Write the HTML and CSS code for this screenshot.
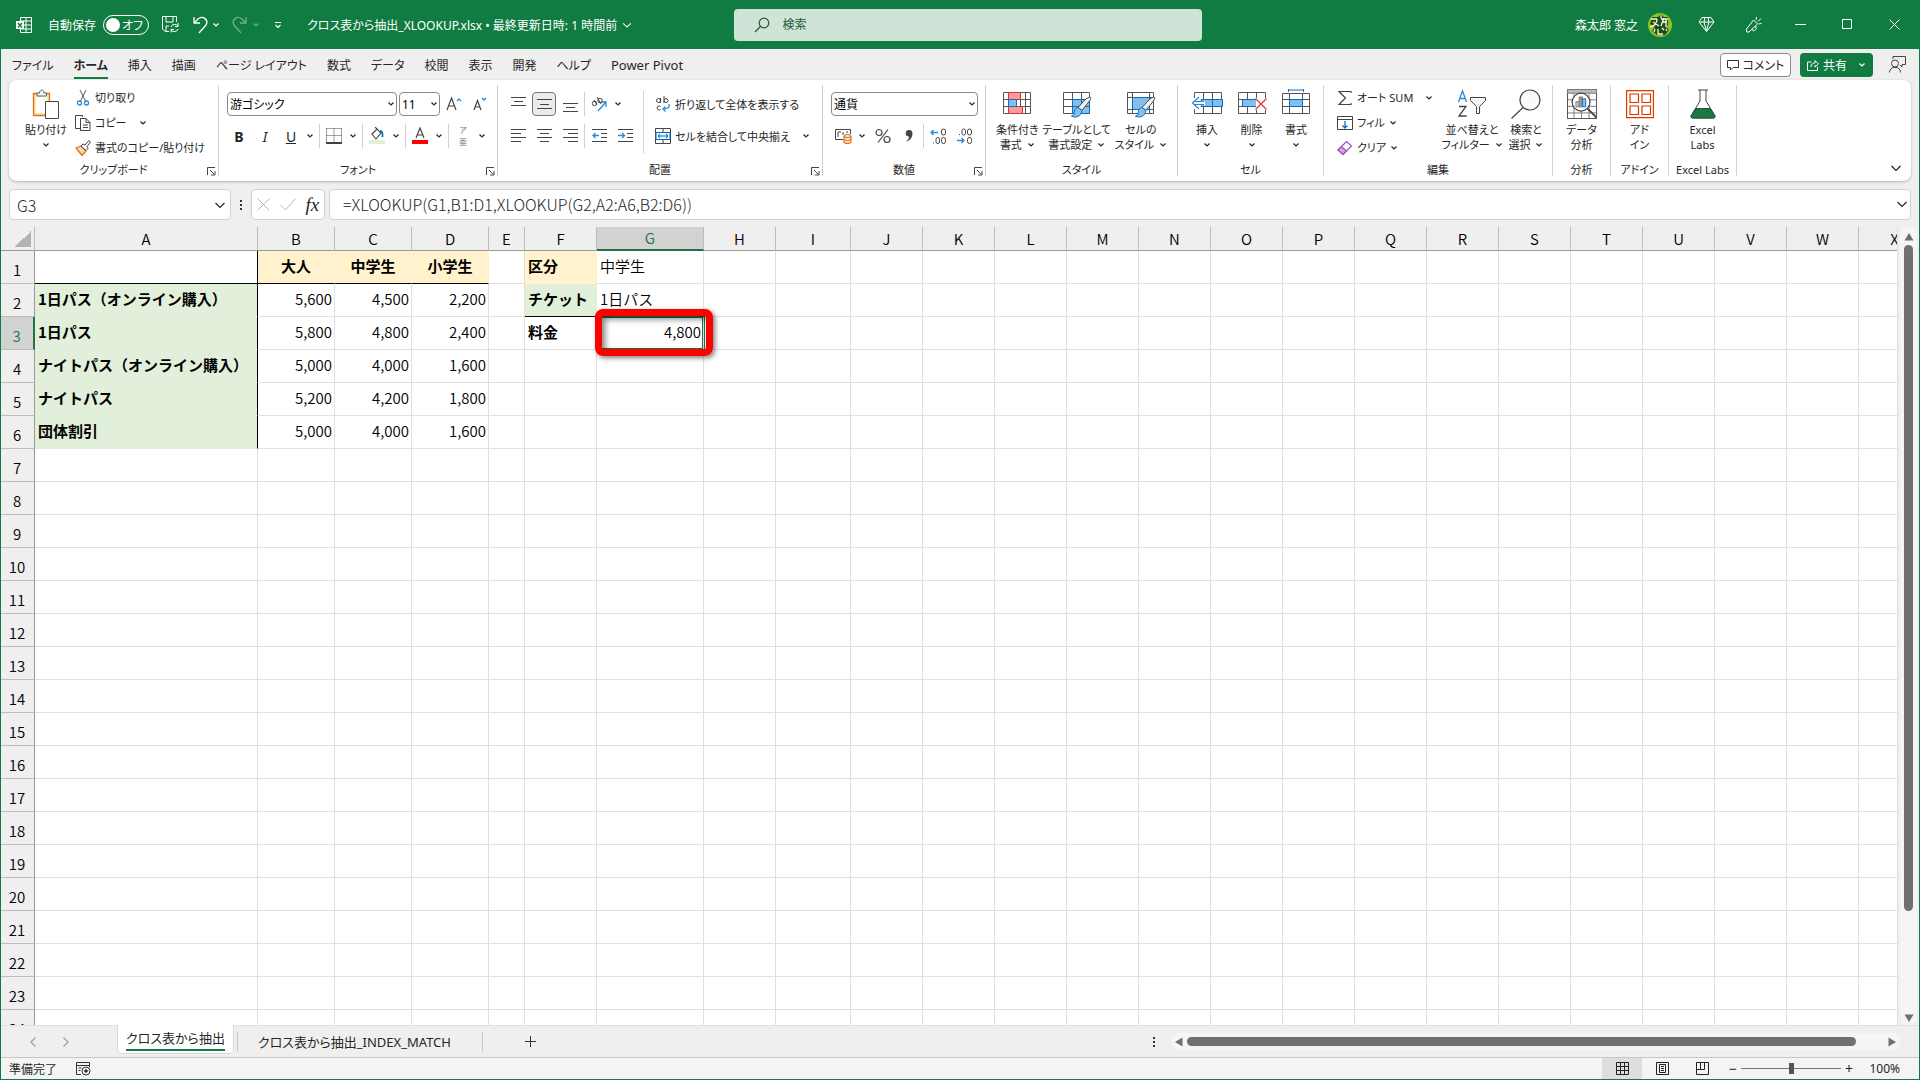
FILE: index.html
```html
<!DOCTYPE html>
<html lang="ja">
<head>
  <meta charset="UTF-8">
  <meta name="viewport" content="width=device-width, initial-scale=1.0">
  <title>クロス表から抽出_XLOOKUP.xlsx</title>
  <link rel="stylesheet" href="styles.css">
</head>
<body>

  <svg class="defs" aria-hidden="true">
    <symbol id="chev" viewBox="0 0 8 8"><path d="M1.5 2.5 4 5l2.5-2.5" fill="none" stroke="currentColor" stroke-width="1.2"/></symbol>
    <symbol id="chev-big" viewBox="0 0 14 14"><path d="m2.5 5 4.500 4.500L11.500 5" fill="none" stroke="currentColor" stroke-width="1.2"/></symbol>
    <symbol id="launch" viewBox="0 0 9 9"><path d="M.5 8V.5H8M3 3l4 4M8 4v4H4" fill="none" stroke="#444"/></symbol>
    <symbol id="brush" viewBox="0 0 22 24"><path d="M20 1c2 0 1 2 0 4l-8 10-4-3 8-9z" fill="#f3f3f3" stroke="#444"/><path d="M8 12c-3 0-4 3-4 5s-2 4-3 4c4 2 10 1 11-6z" fill="#83beec" stroke="#0f6cbd"/></symbol>
  </svg>

  <div class="app">
    <header class="titlebar">
      <div class="title-left">
        <svg class="logo" width="16" height="16" viewBox="0 0 16 16" fill="none" stroke="#fff"><path d="M4.5 4V.5h11v15h-11V12M10 .5v15M4.5 4h11M8 8h7.5M4.5 12h11"/><path d="M0 4h8v8H0z" fill="#fff" stroke="none"/><path d="m2 6 4 4.5M6 6l-4 4.5" stroke="#107c41" stroke-width="1.5"/></svg>
        <label class="autosave">自動保存 <span class="toggle"><input type="checkbox" role="switch">オフ</span></label>
        <button class="tb save" aria-label="保存"><svg width="17" height="17" viewBox="0 0 17 17" fill="none" stroke="#fff"><path d="M7 15.5H3L.5 13V.5h14V6M4 .5V6h7V.5M4 15v-5h3"/><path d="M9 11a4 4 0 0 1 7-1M16 7v3.500h-3M16 13a4 4 0 0 1-7 1M9 16.500V13.500h3"/></svg></button>
        <button class="tb undo" aria-label="元に戻す"><svg width="16" height="18" viewBox="0 0 16 18" fill="none" stroke="#fff" stroke-width="1.3"><path d="M2 1v6h6M2 7l4-4c5-4 11 1 8 6l-7 8"/></svg></button>
        <button class="tb chevb" aria-label="元に戻す一覧"><svg width="8" height="8"><use href="#chev"/></svg></button>
        <button class="tb redo" aria-label="やり直し" disabled><svg width="16" height="18" viewBox="0 0 16 18" fill="none" stroke="#fff" stroke-width="1.3"><path d="M14 1v6H8M14 7l-4-4C5-1 -1 4 2 9l7 8"/></svg></button>
        <button class="tb chevb dim" aria-label="やり直し一覧" disabled><svg width="8" height="8"><use href="#chev"/></svg></button>
        <button class="tb custom" aria-label="カスタマイズ"><svg width="8" height="10" viewBox="0 0 8 10" fill="none" stroke="#fff" stroke-width="1.2"><path d="M1 2.5h6M1.5 5 4 7.500 6.500 5"/></svg></button>
        <span class="filename">クロス表から抽出_XLOOKUP.xlsx • 最終更新日時: 1 時間前</span>
        <svg width="12" height="12"><use href="#chev-big"/></svg>
      </div>
      <label class="search">
        <svg width="16" height="16" viewBox="0 0 16 16" fill="none" stroke="#185c37" stroke-width="1.2"><circle cx="10" cy="6" r="4.8"/><path d="M6.5 9.5 1 15"/></svg>
        <input type="text" placeholder="検索" aria-label="検索">
      </label>
      <div class="title-right">
        <span class="user">森太郎 窓之</span>
        <svg class="avatar" width="24" height="24" viewBox="0 0 24 24"><circle cx="12" cy="12" r="12" fill="#8fc31f"/><path d="M4 4h6l3-3 3 3h4v8l-2 2 3 3-4 5H9l-5-4 3-4-5-3z" fill="#1f4d17"/><path d="M3 6h6M9 6c0 4-3 7-7 8M5 9l6 4M13 2v3M13 6h7M16 5l-3 8M14 9h5M18 6v8M10 16v5h5M14 15l2 2M18 16l1 2M7 16l-1 3" stroke="#f4f9e8" stroke-width="1.3" fill="none"/></svg>
        <button class="win" aria-label="プレミアム"><svg width="17" height="17" viewBox="0 0 17 17" fill="none" stroke="#fff"><path d="M4 1.5h9L16 6l-7.5 9.5L1 6zM1 6h15M6 6l2.500 9L11 6M6 6l1-4.500M11 6l-1-4.500"/></svg></button>
        <button class="win" aria-label="新機能"><svg width="17" height="17" viewBox="0 0 17 17" fill="none" stroke="#fff"><path d="M8.500 4 12.500 8 4 16H1.500v-3zM7 13c0 2 3 3 4-.5V10M11 4l.5-3M13 5.500l3-3M13.500 8l3-.5"/></svg></button>
        <button class="win" aria-label="最小化"><svg width="11" height="11" viewBox="0 0 11 11" stroke="#fff"><path d="M0 5.500h11"/></svg></button>
        <button class="win" aria-label="最大化"><svg width="11" height="11" viewBox="0 0 11 11" fill="none" stroke="#fff"><path d="M.5.5h9v9h-9z"/></svg></button>
        <button class="win" aria-label="閉じる"><svg width="11" height="11" viewBox="0 0 11 11" stroke="#fff"><path d="m.5.5 10 10m0-10-10 10"/></svg></button>
      </div>
    </header>

    <nav class="tabs">
      <a href="#">ファイル</a>
      <a href="#" class="active">ホーム</a>
      <a href="#">挿入</a>
      <a href="#">描画</a>
      <a href="#">ページ レイアウト</a>
      <a href="#">数式</a>
      <a href="#">データ</a>
      <a href="#">校閲</a>
      <a href="#">表示</a>
      <a href="#">開発</a>
      <a href="#">ヘルプ</a>
      <a href="#" class="latin">Power Pivot</a>
      <div class="tab-actions">
        <button class="comment"><svg width="12" height="12" viewBox="0 0 12 12" fill="none" stroke="#333"><path d="M.5 1.5h11v7H6L3.500 11V8.500h-3z"/></svg>コメント</button>
        <button class="share"><svg width="12" height="12" viewBox="0 0 12 12" fill="none" stroke="#fff"><path d="M4.5 3H.5v8.500h10V8M4 8c0-3 2-4 4-4V1.500L11.500 5 8 8V6"/></svg>共有 <svg width="8" height="8"><use href="#chev"/></svg></button>
        <button class="present" aria-label="発表"><svg width="17" height="17" viewBox="0 0 17 17" fill="none" stroke="#444"><circle cx="6" cy="7.500" r="3.500"/><path d="M.5 16.500c0-7 11-7 11 0M4 3V.5h12.500v8H13v2.500L11 9"/></svg></button>
      </div>
    </nav>

    <section class="ribbon">
      <div class="group g-clip">
        <div class="body">
          <button class="big paste">
            <svg width="28" height="30" viewBox="0 0 28 30"><path d="M1.500 4.500h16v22h-16z" fill="#fde3a7" stroke="#d9711f" stroke-width="1.3"/><path d="M4 8h11v16H4z" fill="#fff"/><path d="M5 7V4h2.500c0-4 4.500-4 4.500 0h2.500v3z" fill="#f3f3f3" stroke="#666"/><path d="M13.500 12.500h13v17h-13z" fill="#fff" stroke="#444"/></svg>
            <span>貼り付け</span>
            <svg width="8" height="8"><use href="#chev"/></svg>
          </button>
          <div class="stack">
            <button class="small"><svg width="16" height="16" viewBox="0 0 16 16" fill="none" stroke="#555"><path d="m5 0 5.500 11M11 0 5.500 11"/><circle cx="4.500" cy="13" r="2" stroke="#2b88d8" stroke-width="1.3"/><circle cx="11.500" cy="13" r="2" stroke="#2b88d8" stroke-width="1.3"/></svg>切り取り</button>
            <button class="small"><svg width="16" height="16" viewBox="0 0 16 16" fill="none" stroke="#444"><path d="M5 13.500H.5V.5h7V2M5.500 3.500H11l4 4v8H5.500zM11 3.500v4h4M8 10h5M8 12.500h5"/></svg>コピー<svg class="far" width="8" height="8"><use href="#chev"/></svg></button>
            <button class="small"><svg width="16" height="16" viewBox="0 0 16 16"><path d="m1 8 5-2 5 5-4 4.500z" fill="#fbd9a5" stroke="#d9711f" stroke-width="1.3"/><path d="m6 6 2-2 2 1 4-4.500 1.500 1.500L12 6.500l1 2-2 2z" fill="#fff" stroke="#444"/></svg>書式のコピー/貼り付け</button>
          </div>
        </div>
        <footer>クリップボード<button class="launch" aria-label="クリップボードの詳細"><svg width="9" height="9"><use href="#launch"/></svg></button></footer>
      </div>

      <div class="group g-font">
        <div class="body rows">
          <div class="row top">
            <span class="combo font-name"><select aria-label="フォント"><option>游ゴシック</option></select><svg width="8" height="8"><use href="#chev"/></svg></span>
            <span class="combo font-size"><select aria-label="フォント サイズ"><option>11</option></select><svg width="8" height="8"><use href="#chev"/></svg></span>
            <button class="ib grow" aria-label="フォント サイズの拡大"><svg width="16" height="16" viewBox="0 0 16 16" fill="none"><path d="M1 14 5.500 2 10 14M2.500 10h6" stroke="#444" stroke-width="1.2"/><path d="m11 5 2-2 2 2" stroke="#2b88d8" stroke-width="1.3"/></svg></button>
            <button class="ib" aria-label="フォント サイズの縮小"><svg width="16" height="16" viewBox="0 0 16 16" fill="none"><path d="M2 14 5.500 4.500 9 14M3 11h5" stroke="#444" stroke-width="1.2"/><path d="m10 2 2 2 2-2" stroke="#2b88d8" stroke-width="1.3"/></svg></button>
          </div>
          <div class="row">
            <button class="ib"><b>B</b></button>
            <button class="ib"><i>I</i></button>
            <button class="ib"><u>U</u></button>
            <button class="cb" aria-label="下線"><svg width="8" height="8"><use href="#chev"/></svg></button>
            <span class="vsep"></span>
            <button class="ib" aria-label="罫線"><svg width="16" height="16" viewBox="0 0 16 16" fill="none" stroke="#444"><path d="M.5.5h15M.5 7.500h15M.5.5v14M8 .5v14M15.500.5v14" stroke-dasharray="1 1"/><path d="M0 15h16" stroke="#000" stroke-width="1.5"/></svg></button>
            <button class="cb" aria-label="罫線一覧"><svg width="8" height="8"><use href="#chev"/></svg></button>
            <span class="vsep"></span>
            <button class="ib" aria-label="塗りつぶし"><svg width="16" height="18" viewBox="0 0 16 18" fill="none"><path d="m3 7 5-5 4 4-5 6zM6 0l3 3" stroke="#444" stroke-width="1.1"/><path d="M11 4c2 0 3 2 2.500 6" stroke="#0f6cbd" stroke-width="1.8"/><path d="M0 13h16v4H0z" fill="#e2efda"/></svg></button>
            <button class="cb" aria-label="塗りつぶし一覧"><svg width="8" height="8"><use href="#chev"/></svg></button>
            <span class="vsep"></span>
            <button class="ib" aria-label="フォントの色"><svg width="16" height="18" viewBox="0 0 16 18" fill="none"><path d="m4 11 4-10 4 10M5.500 8h5" stroke="#444" stroke-width="1.2"/><path d="M0 13h16v4H0z" fill="#f00"/></svg></button>
            <button class="cb" aria-label="フォントの色一覧"><svg width="8" height="8"><use href="#chev"/></svg></button>
            <span class="vsep"></span>
            <button class="ib ruby"><span>ア</span><span>亜</span></button>
            <button class="cb" aria-label="ふりがな"><svg width="8" height="8"><use href="#chev"/></svg></button>
          </div>
        </div>
        <footer>フォント<button class="launch" aria-label="フォントの詳細"><svg width="9" height="9"><use href="#launch"/></svg></button></footer>
      </div>

      <div class="group g-align">
        <div class="body">
          <div class="rows">
            <div class="row top">
              <button class="ib" aria-label="上揃え"><svg width="15" height="16" viewBox="0 0 15 16" stroke="#444"><path d="M0 1.500h15M3 5.500h9M0 9.500h15"/></svg></button>
              <button class="ib on" aria-label="上下中央揃え"><svg width="15" height="16" viewBox="0 0 15 16" stroke="#444"><path d="M0 3.500h15M3 8.500h9M0 12.500h15"/></svg></button>
              <button class="ib" aria-label="下揃え"><svg width="15" height="16" viewBox="0 0 15 16" stroke="#444"><path d="M0 7.500h15M3 11.500h9M0 15.500h15"/></svg></button>
              <span class="vsep"></span>
              <button class="ib" aria-label="方向"><svg width="17" height="17" viewBox="0 0 17 17" fill="none"><path d="M7 15 15 6M15 11V6h-5" stroke="#2b88d8" stroke-width="1.3"/><circle cx="3.500" cy="7.500" r="2.200" stroke="#444"/><path d="m3 4 3 5M6 1l4 7" stroke="#444"/><circle cx="9" cy="4.500" r="2.200" stroke="#444"/></svg></button>
              <button class="cb" aria-label="方向一覧"><svg width="8" height="8"><use href="#chev"/></svg></button>
            </div>
            <div class="row">
              <button class="ib" aria-label="左揃え"><svg width="15" height="14" viewBox="0 0 15 14" stroke="#444"><path d="M0 .5h15M0 4.500h10M0 8.500h15M0 12.500h10"/></svg></button>
              <button class="ib" aria-label="中央揃え"><svg width="15" height="14" viewBox="0 0 15 14" stroke="#444"><path d="M0 .5h15M3 4.500h9M0 8.500h15M3 12.500h9"/></svg></button>
              <button class="ib" aria-label="右揃え"><svg width="15" height="14" viewBox="0 0 15 14" stroke="#444"><path d="M0 .5h15M5 4.500h10M0 8.500h15M5 12.500h10"/></svg></button>
              <span class="vsep"></span>
              <button class="ib" aria-label="インデントを減らす"><svg width="15" height="14" viewBox="0 0 15 14" fill="none" stroke="#444"><path d="M0 .5h15M9 4.500h6M9 8.500h6M0 12.500h15"/><path d="M7 6.500H1M3.500 4 1 6.500 3.500 9" stroke="#2b88d8" stroke-width="1.3"/></svg></button>
              <button class="ib" aria-label="インデントを増やす"><svg width="15" height="14" viewBox="0 0 15 14" fill="none" stroke="#444"><path d="M0 .5h15M9 4.500h6M9 8.500h6M0 12.500h15"/><path d="M0 6.500h6M4 4l2.500 2.500L4 9" stroke="#2b88d8" stroke-width="1.3"/></svg></button>
            </div>
          </div>
          <div class="rows wraps">
            <button class="small"><svg width="16" height="16" viewBox="0 0 16 16" fill="none" stroke="#444"><circle cx="3.500" cy="4.500" r="2"/><path d="M5.500 2v5M9 0v7"/><circle cx="11" cy="4.500" r="2"/><path d="M5.500 10.500a2 2 0 1 0 0 3"/><path d="M14 8c1 4-2 5-6 5M10.500 10.500 8 13l2.500 2.500" stroke="#2b88d8" stroke-width="1.3"/></svg>折り返して全体を表示する</button>
            <button class="small"><svg width="16" height="16" viewBox="0 0 16 16" fill="none" stroke="#444"><path d="M.5.5h15v15H.5zM.5 4.500h15M.5 11.500h15M8 .5v4M8 11.500v4"/><path d="M1 4.500h14v7H1z" fill="#e8f3fc" stroke="#0f6cbd"/><path d="M3 8h10M5 6 3 8l2 2M11 6l2 2-2 2" stroke="#0f6cbd"/></svg>セルを結合して中央揃え<svg class="far" width="8" height="8"><use href="#chev"/></svg></button>
          </div>
        </div>
        <footer>配置<button class="launch" aria-label="配置の詳細"><svg width="9" height="9"><use href="#launch"/></svg></button></footer>
      </div>

      <div class="group g-num">
        <div class="body rows">
          <div class="row top">
            <span class="combo num-format"><select aria-label="数値の書式"><option>通貨</option></select><svg width="8" height="8"><use href="#chev"/></svg></span>
          </div>
          <div class="row">
            <button class="ib" aria-label="通貨表示形式"><svg width="17" height="16" viewBox="0 0 17 16" fill="none"><path d="M8 11.500H.5v-10h15V6M3 9V4h3M8 4v3M11 4h2" stroke="#444"/><path d="M9 8v6c0 2 7 2 7 0V8" fill="#fde0c4" stroke="#d9711f" stroke-width="1.2"/><ellipse cx="12.500" cy="8" rx="3.500" ry="1.500" fill="#fde0c4" stroke="#d9711f"/><path d="M9 11c0 2 7 2 7 0" stroke="#d9711f"/></svg></button>
            <button class="cb" aria-label="通貨一覧"><svg width="8" height="8"><use href="#chev"/></svg></button>
            <button class="ib" aria-label="パーセント"><svg width="16" height="16" viewBox="0 0 16 16" fill="none" stroke="#444" stroke-width="1.2"><circle cx="4" cy="4.500" r="3"/><circle cx="12" cy="11.500" r="3"/><path d="M13 1.500 3 14.500"/></svg></button>
            <button class="ib" aria-label="桁区切り"><svg width="8" height="14" viewBox="0 0 8 14"><path d="M4 1a3.200 3.200 0 1 0 0 6.500C4 10 2.500 11.500 1 12.500 5 12 7.500 8 7.500 4.500 7.500 2 6 1 4 1z" fill="#444"/></svg></button>
            <span class="vsep"></span>
            <button class="ib" aria-label="小数点以下の表示桁数を増やす"><svg width="17" height="17" viewBox="0 0 17 17" fill="none" stroke="#444"><rect x="11.500" y="1" width="4" height="6" rx="2"/><rect x="6" y="9.500" width="3.500" height="6" rx="1.700"/><rect x="11.500" y="9.500" width="4" height="6" rx="2"/><path d="M3 15h1"/><path d="M8 4.500H1M3.500 2 1 4.500 3.500 7" stroke="#2b88d8" stroke-width="1.3"/></svg></button>
            <button class="ib" aria-label="小数点以下の表示桁数を減らす"><svg width="17" height="17" viewBox="0 0 17 17" fill="none" stroke="#444"><rect x="6" y="1" width="3.500" height="6" rx="1.700"/><rect x="11.500" y="1" width="4" height="6" rx="2"/><rect x="11.500" y="9.500" width="4" height="6" rx="2"/><path d="M3 6.500h1"/><path d="M1 12.500h7M5.500 10 8 12.500 5.500 15" stroke="#2b88d8" stroke-width="1.3"/></svg></button>
          </div>
        </div>
        <footer>数値<button class="launch" aria-label="数値の詳細"><svg width="9" height="9"><use href="#launch"/></svg></button></footer>
      </div>

      <div class="group g-style">
        <div class="body">
          <button class="big">
            <svg width="30" height="30" viewBox="0 0 30 30" fill="none" stroke="#555"><path d="M1.500 3.500h27v21h-27zM1.500 10.500h27M1.500 17.500h27M6.500 3.500v21M18.500 3.500v21M23.500 3.500v21"/><path d="M6.500 3.500h12v7h-12zM6.500 17.500h14v7h-14z" fill="#ff9a9a" stroke="#d13438"/><path d="M6.500 10.500h8v7h-8z" fill="#83beec" stroke="#0f6cbd"/></svg>
            <span>条件付き<br>書式 <svg width="8" height="8"><use href="#chev"/></svg></span>
          </button>
          <button class="big">
            <svg width="30" height="30" viewBox="0 0 30 30" fill="none" stroke="#555"><path d="M1.500 3.500h26v21h-26zM1.500 10.500h26M1.500 17.500h26M10.500 3.500v21M19.500 3.500v21"/><path d="M10.500 10.500h17v14h-17z" fill="#83beec" stroke="#0f6cbd"/><path d="M10 17.500h17M19.500 10.500v14" stroke="#0f6cbd"/><use href="#brush" x="8" y="7" width="22" height="23"/></svg>
            <span>テーブルとして<br>書式設定 <svg width="8" height="8"><use href="#chev"/></svg></span>
          </button>
          <button class="big">
            <svg width="30" height="30" viewBox="0 0 30 30" fill="none" stroke="#555"><path d="M1.500 3.500h26v21h-26zM1.500 8.500h26M1.500 20.500h26M6.500 3.500v21M23.500 3.500v21"/><path d="M6.500 8.500h17v12h-17z" fill="#83beec" stroke="#0f6cbd"/><use href="#brush" x="8" y="7" width="22" height="23"/></svg>
            <span>セルの<br>スタイル <svg width="8" height="8"><use href="#chev"/></svg></span>
          </button>
        </div>
        <footer>スタイル</footer>
      </div>

      <div class="group g-cell">
        <div class="body">
          <button class="big">
            <svg width="32" height="30" viewBox="0 0 32 30" fill="none" stroke="#555"><path d="M3.500 3.500h27v21h-27zM12.500 3.500v21M21.500 3.500v21"/><path d="M10 10.500h21.500v7H10z" fill="#83beec" stroke="#0f6cbd"/><path d="M21.500 10.500v7" stroke="#0f6cbd"/><path d="M1 9h6l3 3h4v4h-4l-3 4H1z" fill="#fff" stroke="none"/><path d="M13 12.500H3M13 15.500H3M8 8l-6.500 6L8 20" stroke="#2b88d8" stroke-width="1.2"/></svg>
            <span>挿入</span><svg width="8" height="8"><use href="#chev"/></svg>
          </button>
          <button class="big">
            <svg width="32" height="30" viewBox="0 0 32 30" fill="none" stroke="#555"><path d="M2.500 3.500h27v21h-27zM2.500 10.500h27M2.500 17.500h27M11.500 3.500v21M20.500 3.500v21"/><path d="M6.500 10.500h15v7h-15z" fill="#83beec" stroke="#0f6cbd"/><path d="M20 9h12v12H20z" fill="#fff" stroke="none"/><path d="m19.500 9.500 11 11m0-11-11 11" stroke="#e8383d" stroke-width="1.300"/></svg>
            <span>削除</span><svg width="8" height="8"><use href="#chev"/></svg>
          </button>
          <button class="big">
            <svg width="32" height="30" viewBox="0 0 32 30" fill="none" stroke="#555"><path d="M2.500 4.500h27v20h-27zM2.500 10.500h27M2.500 17.500h27M9.500 4.500v20M22.500 4.500v20"/><path d="M9.500 10.500h13v7h-13z" fill="#83beec" stroke="#0f6cbd"/><path d="M8.500 1h15M8.500 0v3M23.500 0v3" stroke="#0f6cbd"/></svg>
            <span>書式</span><svg width="8" height="8"><use href="#chev"/></svg>
          </button>
        </div>
        <footer>セル</footer>
      </div>

      <div class="group g-edit">
        <div class="body">
          <div class="stack">
            <button class="small"><svg width="16" height="16" viewBox="0 0 16 16" fill="none" stroke="#444" stroke-width="1.2"><path d="M14 3V1.500H2L8.500 8 2 14.500h12V13"/></svg>オート SUM<svg class="far" width="8" height="8"><use href="#chev"/></svg></button>
            <button class="small"><svg width="16" height="16" viewBox="0 0 16 16" fill="none" stroke="#444"><path d="M.5 1.500h15v13H.5zM.5 4.500h15"/><path d="M8 6v7M5.500 10.500 8 13l2.500-2.500" stroke="#0f6cbd" stroke-width="1.3"/></svg>フィル<svg class="near" width="8" height="8"><use href="#chev"/></svg></button>
            <button class="small"><svg width="16" height="16" viewBox="0 0 16 16" stroke="#a34fb5" stroke-width="1.2"><path d="m1 10 8.500-8.500 5 4.500L6 14.500z" fill="#fff"/><path d="m1 10 3.500-3.500 5 4.500L6 14.500z" fill="#d9a5e3"/></svg>クリア<svg class="near" width="8" height="8"><use href="#chev"/></svg></button>
          </div>
          <button class="big sort">
            <svg width="30" height="30" viewBox="0 0 30 30" fill="none"><path d="m1.500 13 4-11 4 11M3 9.500h5" stroke="#2b88d8" stroke-width="1.3"/><path d="M2 17.500h7L2 27h7.500" stroke="#444" stroke-width="1.3"/><path d="M13.500 8.500h15v3l-6 6v7h-3v-7l-6-6z" fill="#f7f7f7" stroke="#444"/></svg>
            <span>並べ替えと<br>フィルター <svg width="8" height="8"><use href="#chev"/></svg></span>
          </button>
          <button class="big find">
            <svg width="30" height="30" viewBox="0 0 30 30" fill="none" stroke="#444" stroke-width="1.2"><circle cx="19" cy="11" r="10" fill="#fafafa"/><path d="M12 18.500.5 29.500"/></svg>
            <span>検索と<br>選択 <svg width="8" height="8"><use href="#chev"/></svg></span>
          </button>
        </div>
        <footer>編集</footer>
      </div>

      <div class="group g-small">
        <div class="body">
          <button class="big">
            <svg width="32" height="32" viewBox="0 0 32 32" fill="none" stroke="#777"><path d="M.5.5h31v31H.5z" stroke="#444"/><path d="M.5.5h31v4H.5z" fill="#bbb"/><path d="M.5 11.500h31M.5 18.500h31M.5 25.500h31M7.500 5v26M15.500 5v26M23.500 5v26"/><circle cx="15" cy="14" r="9.500" fill="#fff" stroke="#444" stroke-width="1.3"/><path d="M9.500 13.500H13V19H9.500z" fill="#ccc"/><path d="M13 8.500h3.500V19H13z" fill="#999"/><path d="M16.500 10.500H20V19h-3.500z" fill="#83beec" stroke="#0f6cbd"/><path d="m22 21 9.500 9.500" stroke="#444" stroke-width="2"/></svg>
            <span>データ<br>分析</span>
          </button>
        </div>
        <footer>分析</footer>
      </div>
      <div class="group g-small">
        <div class="body">
          <button class="big">
            <svg width="28" height="30" viewBox="0 0 28 30" fill="none" stroke="#d83b01" stroke-width="1.2"><path d="M.6 1.600h26.800v27H.6zM4 5h8.500v8.500H4zM16 5h8.500v8.500H16zM4 17h8.500v8.500H4zM16 17h8.500v8.500H16z"/></svg>
            <span>アド<br>イン</span>
          </button>
        </div>
        <footer>アドイン</footer>
      </div>
      <div class="group g-labs">
        <div class="body">
          <button class="big">
            <svg width="26" height="30" viewBox="0 0 26 30"><path d="M10 1v11L1 27c0 2 1 2 2 2h20c1 0 2 0 2-2l-9-15V1" fill="#fff" stroke="#444"/><path d="M8 1h10" stroke="#444"/><path d="M5.500 19.500h15L25 27c0 2-1 2-2 2H3c-1 0-2 0-2-2z" fill="#217346" stroke="#185c37"/></svg>
            <span>Excel<br>Labs</span>
          </button>
        </div>
        <footer>Excel Labs</footer>
      </div>
      <button class="collapse" aria-label="リボンを折りたたむ"><svg width="14" height="14"><use href="#chev-big"/></svg></button>
    </section>

    <div class="formula-bar">
      <label class="box name-box"><input type="text" value="G3" aria-label="名前ボックス"><svg width="14" height="14"><use href="#chev-big"/></svg></label>
      <span class="dots"></span>
      <div class="box fx-box">
        <button aria-label="キャンセル"><svg width="13" height="13" viewBox="0 0 13 13" stroke="#b5b5b5"><path d="m.5.5 12 12m0-12-12 12"/></svg></button>
        <button aria-label="入力"><svg width="16" height="13" viewBox="0 0 16 13" fill="none" stroke="#b5b5b5"><path d="m.5 7 5 5L15.500.5"/></svg></button>
        <button class="fx">fx</button>
      </div>
      <label class="box formula"><input type="text" value="=XLOOKUP(G1,B1:D1,XLOOKUP(G2,A2:A6,B2:D6))" aria-label="数式"><svg width="14" height="14"><use href="#chev-big"/></svg></label>
    </div>

    <main class="workspace">
      <div class="sheet">
        <table id="grid"></table>
      </div>
      <div class="vscroll">
        <svg width="10" height="8" viewBox="0 0 10 8"><path d="M5 0 9.500 7.500h-9z" fill="#707070"/></svg>
        <div class="track"><div class="thumb"></div></div>
        <svg width="10" height="8" viewBox="0 0 10 8"><path d="M5 8 .5.5h9z" fill="#707070"/></svg>
      </div>
    </main>

    <div class="sheetbar">
      <button class="nav" aria-label="前のシート"><svg width="6" height="10" viewBox="0 0 6 10" fill="none" stroke="#a0a0a0" stroke-width="1.3"><path d="M5.500.5 1 5l4.500 4.500"/></svg></button>
      <button class="nav" aria-label="次のシート"><svg width="6" height="10" viewBox="0 0 6 10" fill="none" stroke="#a0a0a0" stroke-width="1.3"><path d="M.5.5 5 5 .5 9.500"/></svg></button>
      <a href="#" class="sheet-tab current"><span>クロス表から抽出</span></a>
      <a href="#" class="sheet-tab">クロス表から抽出_INDEX_MATCH</a>
      <button class="add" aria-label="新しいシート"><svg width="11" height="11" viewBox="0 0 11 11" stroke="#333"><path d="M0 5.500h11M5.500 0v11"/></svg></button>
      <span class="dots"></span>
      <div class="hscroll">
        <svg width="8" height="10" viewBox="0 0 8 10"><path d="m0 5 7.500-4.500v9z" fill="#707070"/></svg>
        <div class="track"><div class="thumb"></div></div>
        <svg width="8" height="10" viewBox="0 0 8 10"><path d="M8 5 .5.5v9z" fill="#707070"/></svg>
      </div>
    </div>

    <footer class="status">
      <span>準備完了</span>
      <svg class="macro" width="15" height="14" viewBox="0 0 15 14" fill="none" stroke="#333"><path d="M5 12.500H.5V.5h13V5M.5 3.500h13M2.500 6h3M2.500 8.500h2"/><circle cx="10" cy="9" r="4"/><circle cx="10" cy="9" r="1.3" fill="#333"/></svg>
      <div class="views">
        <button class="on" aria-label="標準"><svg width="13" height="13" viewBox="0 0 13 13" fill="none" stroke="#222"><path d="M.5.5h12v12H.5zM.5 4.500h12M.5 8.500h12M4.500.5v12M8.500.5v12"/></svg></button>
        <button aria-label="ページ レイアウト"><svg width="13" height="13" viewBox="0 0 13 13" fill="none" stroke="#222"><path d="M.5.5h12v12H.5zM3.500 2.500h6v8h-6zM5 4.500h3M5 6.500h3M5 8.500h3"/></svg></button>
        <button aria-label="改ページ プレビュー"><svg width="13" height="13" viewBox="0 0 13 13" fill="none" stroke="#222"><path d="M.5.5h12v12H.5zM.5 7.500h8v-7M4.500.5v7"/></svg></button>
      </div>
      <button class="zoom" aria-label="縮小">−</button>
      <input type="range" min="10" max="190" value="100" aria-label="ズーム">
      <button class="zoom" aria-label="拡大">+</button>
      <span class="percent">100%</span>
    </footer>
  </div>

  <script>
    const widths = { A: 223, B: 77, C: 77, D: 77, E: 36, F: 72, G: 107, I: 75 };
    const cols = 'ABCDEFGHIJKLMNOPQRSTUVWX'.split('');
    const cells = {
      B1: ['大人', 'head'], C1: ['中学生', 'head'], D1: ['小学生', 'head'],
      A1: ['', 'edge under'],
      A2: ['1日パス（オンライン購入）', 'item edge'],
      A3: ['1日パス', 'item edge'],
      A4: ['ナイトパス（オンライン購入）', 'item edge'],
      A5: ['ナイトパス', 'item edge'],
      A6: ['団体割引', 'item edge'],
      F1: ['区分', 'key yellow'], G1: ['中学生', ''],
      F2: ['チケット', 'key green under'], G2: ['1日パス', ''],
      F3: ['料金', 'key'], G3: ['4,800', 'num selected']
    };
    const prices = [
      ['5,600', '4,500', '2,200'],
      ['5,800', '4,800', '2,400'],
      ['5,000', '4,000', '1,600'],
      ['5,200', '4,200', '1,800'],
      ['5,000', '4,000', '1,600']
    ];
    prices.forEach((row, r) => row.forEach((p, c) => {
      cells['BCD'[c] + (r + 2)] = [p, 'num'];
    }));

    let html = '<colgroup><col style="width:34px">';
    cols.forEach(c => html += `<col style="width:${widths[c] || 72}px">`);
    html += '</colgroup><thead><tr><th class="corner"></th>';
    cols.forEach(c => html += `<th class="${c === 'G' ? 'active' : ''}">${c}</th>`);
    html += '</tr></thead><tbody>';
    for (let r = 1; r <= 24; r++) {
      html += `<tr><th class="${r === 3 ? 'active' : ''}">${r}</th>`;
      cols.forEach(c => {
        const cell = cells[c + r] || ['', ''];
        const mark = c + r === 'G3' ? '<span class="highlight"></span>' : '';
        html += `<td class="${cell[1]}">${cell[0]}${mark}</td>`;
      });
      html += '</tr>';
    }
    document.getElementById('grid').innerHTML = html + '</tbody>';
  </script>
</body>
</html>
```
FILE: styles.css
```css
* {
  box-sizing: border-box;
}

body {
  margin: 0;
  font-family: "Noto Sans", "Noto Sans CJK JP", sans-serif;
  font-size: 12px;
  font-feature-settings: "palt";
  color: #262626;
}

button {
  padding: 0;
  border: none;
  background: none;
  color: inherit;
  font: inherit;
  font-feature-settings: inherit;
  display: flex;
  align-items: center;
  justify-content: center;
}

input,
select {
  font: inherit;
  font-feature-settings: inherit;
  color: inherit;
  outline: none;
}

a {
  color: inherit;
  text-decoration: none;
}

svg {
  flex: none;
  display: block;
}

.defs {
  display: none;
}

.app {
  height: 100vh;
  display: flex;
  flex-direction: column;
  background-color: #efefef;
  border: 1px solid #107c41;
  border-top: none;
  overflow: hidden;
  white-space: nowrap;
}

/* title bar */
.titlebar {
  flex: none;
  height: 49px;
  padding-left: 15px;
  background-color: #107c41;
  color: #fff;
  display: grid;
  grid-template-columns: 1fr 468px 1fr;
  align-items: center;
}

.title-left,
.title-right {
  display: flex;
  align-items: center;
}

.logo {
  margin-right: 16px;
}

.autosave {
  display: flex;
  align-items: center;
  gap: 7px;
}

.toggle {
  width: 46px;
  height: 20px;
  padding: 0 5px 0 2px;
  border: 1px solid #fff;
  border-radius: 10px;
  display: flex;
  align-items: center;
  justify-content: space-between;
}

.toggle input {
  appearance: none;
  width: 14px;
  height: 14px;
  margin: 0;
  border-radius: 50%;
  background-color: #fff;
}

.save {
  margin-left: 13px;
}

.undo {
  margin-left: 13px;
}

.chevb {
  width: 16px;
}

.redo {
  margin-left: 8px;
  opacity: 0.4;
}

.dim {
  opacity: 0.4;
}

.custom {
  margin: 0 25px 0 10px;
}

.filename {
  margin-right: 4px;
}

.search {
  height: 32px;
  padding-left: 20px;
  border-radius: 4px;
  background-color: #cfe3d7;
  color: #185c37;
  display: flex;
  align-items: center;
  gap: 13px;
}

.search input {
  flex: 1;
  border: none;
  background: none;
  padding: 0;
}

.search input::placeholder {
  color: #185c37;
}

.title-right {
  justify-content: flex-end;
  padding-right: 1px;
}

.avatar {
  margin: 0 11px 0 10px;
}

.win {
  width: 47px;
  height: 32px;
}

/* ribbon tabs */
.tabs {
  flex: none;
  height: 31px;
  padding: 0 7px 0 11px;
  display: flex;
  align-items: center;
  gap: 20px;
}

.tabs a {
  height: 28px;
  line-height: 29px;
}

.tabs .active {
  font-weight: bold;
  border-bottom: 2px solid #107c41;
}

.tabs .latin {
  font-size: 13px;
}

.tab-actions {
  margin-left: auto;
  display: flex;
  align-items: center;
  gap: 9px;
}

.comment {
  height: 24px;
  width: 71px;
  gap: 4px;
  border: 1px solid #8a8a8a;
  border-radius: 4px;
  background-color: #fff;
}

.share {
  height: 24px;
  width: 73px;
  gap: 4px;
  border-radius: 4px;
  background-color: #107c41;
  color: #fff;
}

.share svg:last-child {
  margin-left: 7px;
}

.present {
  width: 30px;
}

/* ribbon */
.ribbon {
  flex: none;
  height: 101px;
  margin: 0 8px;
  padding-top: 5px;
  border-radius: 8px;
  background-color: #fff;
  box-shadow: 0 1px 3px rgba(0, 0, 0, 0.25);
  display: flex;
  font-size: 11px;
  line-height: 15px;
}

.group {
  flex: none;
  height: 91px;
  border-right: 1px solid #d1d1d1;
  display: flex;
  flex-direction: column;
}

.g-clip { width: 210px; }
.g-font { width: 279px; }
.g-align { width: 325px; }
.g-num { width: 163px; }
.g-style { width: 192px; }
.g-cell { width: 146px; }
.g-edit { width: 229px; }
.g-small { width: 58px; }
.g-labs { width: 68px; }

.body {
  flex: none;
  height: 75px;
  display: flex;
}

.group footer {
  position: relative;
  height: 16px;
  line-height: 20px;
  text-align: center;
}

.launch {
  position: absolute;
  right: 2px;
  top: 7px;
}

.big {
  flex-direction: column;
  justify-content: flex-start;
  align-items: center;
}

.big > svg:first-child {
  height: 30px;
  margin: 4px 0 3px;
}

.big span svg {
  display: inline-block;
  margin-left: 2px;
}

.big > svg:last-child {
  margin-top: 4px;
}

.paste {
  width: 54px;
  margin: 0 2px 0 10px;
}

.stack {
  display: flex;
  flex-direction: column;
}

.small {
  height: 25px;
  justify-content: flex-start;
  gap: 4px;
}

.small .far {
  margin-left: 8px;
}

.rows {
  display: flex;
  flex-direction: column;
  gap: 8px;
  padding: 7px 0 0 8px;
}

.row {
  height: 24px;
  display: flex;
  align-items: center;
  gap: 2px;
}

.ib {
  width: 24px;
  height: 24px;
  font-size: 14px;
}

.ib.on {
  border: 1px solid #777;
  border-radius: 4px;
  background-color: #ebebeb;
}

.cb {
  width: 14px;
  height: 24px;
  margin-left: -2px;
}

.ruby {
  flex-direction: column;
  font-size: 8px;
  line-height: 12px;
  color: #777;
}

.vsep {
  width: 1px;
  height: 24px;
  background-color: #d1d1d1;
}

.combo {
  position: relative;
  height: 24px;
}

.combo select {
  appearance: none;
  width: 100%;
  height: 24px;
  padding: 0 2px;
  border: 1px solid #8a8a8a;
  border-radius: 4px;
  background-color: #fff;
  color: #000;
  font-size: 12px;
}

.combo svg {
  position: absolute;
  right: 2px;
  top: 8px;
}

.font-name { width: 170px; }
.font-size { width: 41px; }
.num-format { width: 147px; }

.g-align .rows:first-child {
  width: 142px;
}

.wraps {
  margin-left: 3px;
  padding-left: 12px;
  background: linear-gradient(#d1d1d1, #d1d1d1) no-repeat 0 6px / 1px 62px;
}

.wraps .small {
  height: 24px;
}

.g-style .body {
  padding: 0 10px 0 10px;
  justify-content: space-between;
}

.g-cell .body {
  padding: 0 11px 0 13px;
  justify-content: space-between;
}

.g-edit .body {
  padding-left: 13px;
}

.g-edit .stack {
  width: 100px;
}

.sort {
  width: 58px;
  margin-left: 6px;
}

.find {
  width: 50px;
}

.g-small .big,
.g-labs .big {
  flex: 1;
}

.collapse {
  margin: 76px 8px 0 auto;
  height: 14px;
}

/* formula bar */
.formula-bar {
  flex: none;
  padding: 8px 8px 7px;
  display: flex;
  align-items: center;
}

.box {
  height: 31px;
  border: 1px solid #d1d1d1;
  border-radius: 4px;
  background-color: #fff;
  display: flex;
  align-items: center;
}

.box input {
  flex: 1;
  min-width: 0;
  border: none;
  padding: 0;
  background: none;
  font-family: "Noto Sans CJK JP", sans-serif;
  font-size: 16px;
  line-height: 24px;
  font-weight: 300;
  font-feature-settings: normal;
}

.name-box {
  width: 222px;
  padding: 0 3px 0 7px;
}

.dots {
  width: 20px;
  height: 12px;
  background: radial-gradient(circle, #333 1px, transparent 1px) center top / 4px 4px repeat-y;
}

.fx-box {
  width: 74px;
  justify-content: space-around;
}

.fx {
  font: italic 19px/20px "Liberation Serif", serif;
}

.formula {
  flex: 1;
  margin-left: 4px;
  padding: 0 1px 2px 13px;
}

/* grid */
.workspace {
  flex: 1;
  min-height: 0;
  display: flex;
}

.sheet {
  flex: 1;
  min-width: 0;
  overflow: hidden;
  border-right: 1px solid #e0e0e0;
}

#grid {
  width: 1893px;
  table-layout: fixed;
  border-spacing: 0;
  background-color: #fff;
  font-family: "Noto Sans CJK JP", sans-serif;
  font-size: 15px;
  font-weight: 350;
  line-height: 20px;
  font-feature-settings: normal;
  color: #000;
}

#grid th {
  padding: 0;
  font-weight: 350;
  background-color: #efefef;
}

#grid thead th {
  height: 24px;
  border-right: 1px solid #bdbdbd;
  border-bottom: 1px solid #999;
}

#grid tbody th {
  height: 33px;
  padding-top: 5px;
  padding-right: 1px;
  border-right: 1px solid #999;
  border-bottom: 1px solid #bdbdbd;
  line-height: 24px;
}

#grid thead .corner {
  background: linear-gradient(135deg, #efefef 50%, #b3b3b3 50%) no-repeat 14px 4px / 16px 16px #efefef;
}

#grid thead .active {
  background-color: #d2d2d2;
  color: #217346;
  border-bottom: 2px solid #217346;
}

#grid tbody .active {
  background-color: #d2d2d2;
  color: #217346;
  border-right: 2px solid #217346;
}

td {
  padding: 0 3px 2px;
  border-right: 1px solid #e0e0e0;
  border-bottom: 1px solid #e0e0e0;
}

.num {
  text-align: right;
  padding-right: 2px;
}

.head {
  text-align: center;
  font-weight: bold;
  background-color: #fff2cc;
  border-right-color: #fff2cc;
  border-bottom-color: #000;
}

.item,
.green {
  font-weight: bold;
  background-color: #e2efda;
  border-color: #e2efda;
}

.key {
  font-weight: bold;
}

.yellow {
  background-color: #fff2cc;
  border-color: #fff2cc;
}

.edge {
  border-right-color: #000;
}

.under {
  border-bottom-color: #000;
}

.selected {
  position: relative;
  box-shadow: 0 0 0 1px #217346, inset 0 0 0 1px #217346;
}

.highlight {
  position: absolute;
  top: -8px;
  right: -10px;
  bottom: -7px;
  left: -2px;
  border: 7px solid #f00;
  border-radius: 8px;
  box-shadow: 2px 2px 5px rgba(0, 0, 0, 0.5), inset 3px 3px 6px rgba(0, 0, 0, 0.5);
}

.vscroll {
  width: 17px;
  margin: 0 2px 0 2px;
  padding: 6px 0 3px;
  border-radius: 8px;
  background-color: #f5f5f5;
  display: flex;
  flex-direction: column;
  align-items: center;
  gap: 4px;
}

.track {
  flex: 1;
}

.thumb {
  border-radius: 5px;
  background-color: #707070;
}

.vscroll .thumb {
  width: 9px;
  height: 87%;
}

/* sheet tabs */
.sheetbar {
  flex: none;
  height: 32px;
  border-top: 1px solid #e0e0e0;
  display: flex;
  align-items: center;
  font-size: 13px;
}

.nav {
  width: 33px;
}

.nav:first-child {
  margin-left: 15px;
}

.sheet-tab {
  height: 20px;
  min-width: 246px;
  padding: 0 20px;
  border-right: 1px solid #c6c6c6;
  border-left: 1px solid #c6c6c6;
  line-height: 20px;
}

.sheet-tab.current {
  height: 29px;
  min-width: 0;
  margin: -4px 3px 0 35px;
  padding: 0 8px;
  border: 1px solid #d9d9d9;
  border-top: none;
  border-radius: 0 0 5px 5px;
  background-color: #fff;
  line-height: 26px;
}

.current span {
  display: block;
  height: 26px;
  border-bottom: 2px solid #107c41;
}

.add {
  margin-left: 42px;
}

.sheetbar .dots {
  margin-left: auto;
}

.hscroll {
  width: 38%;
  height: 17px;
  margin-right: 19px;
  margin-left: 7px;
  padding: 0 4px;
  border-radius: 8px;
  background-color: #f5f5f5;
  display: flex;
  align-items: center;
  gap: 4px;
}

.hscroll .thumb {
  width: 96%;
  height: 9px;
}

/* status bar */
.status {
  flex: none;
  height: 22px;
  padding: 0 19px 0 8px;
  border-top: 1px solid #c6c6c6;
  background-color: #f4f4f4;
  display: flex;
  align-items: center;
}

.macro {
  margin-left: 19px;
}

.views {
  margin-left: auto;
  margin-right: 3px;
  display: flex;
}

.views button {
  width: 40px;
  height: 21px;
}

.views .on {
  background-color: #dedede;
}

.zoom {
  width: 16px;
  font-size: 14px;
}

input[type="range"] {
  appearance: none;
  width: 100px;
  height: 12px;
  margin: 0;
  background: linear-gradient(#777, #777) no-repeat center / 100% 1px;
}

input[type="range"]::-webkit-slider-thumb {
  appearance: none;
  width: 5px;
  height: 11px;
  background-color: #555;
}

.percent {
  width: 43px;
  text-align: right;
}
```
